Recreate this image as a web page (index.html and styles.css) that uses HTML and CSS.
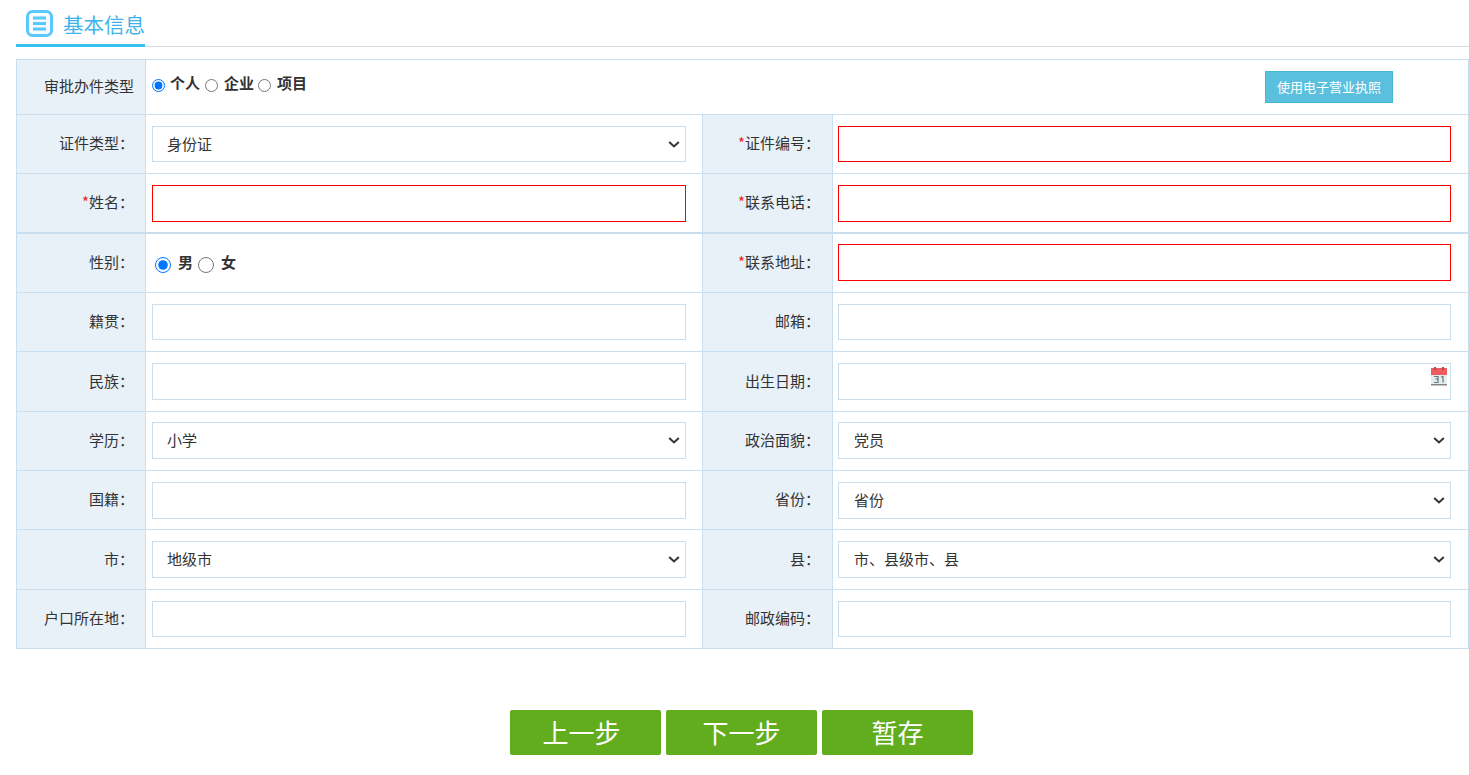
FILE: index.html
```html
<!DOCTYPE html>
<html lang="zh-CN">
<head>
<meta charset="utf-8">
<title>基本信息</title>
<link rel="stylesheet" href="styles.css">
</head>
<body>
<div class="page">
  <div class="tab-bar">
    <div class="tab">
      <svg class="tab-icon" width="27" height="27" viewBox="0 0 27 27" aria-hidden="true">
        <rect x="1.500" y="1.500" width="24" height="24" rx="5" fill="#f2fbff" stroke="#5ac8fa" stroke-width="3"/>
        <path d="M7 8h13M7 13.500h13M7 19h13" stroke="#5ac8fa" stroke-width="3" fill="none"/>
      </svg>
      <span>基本信息</span>
    </div>
  </div>
  <table class="form">
    <colgroup><col class="c1"><col class="c2"><col class="c3"><col class="c4"></colgroup>
    <tbody>
      <tr class="r55">
        <th>审批办件类型</th>
        <td colspan="3">
          <div class="type-row">
            <div class="radios small">
              <input type="radio" name="t" checked><b>个人</b>
              <input type="radio" name="t"><b>企业</b>
              <input type="radio" name="t"><b>项目</b>
            </div>
            <button class="license" type="button">使用电子营业执照</button>
          </div>
        </td>
      </tr>
      <tr class="r59">
        <th>证件类型：</th>
        <td><select class="field short"><option>身份证</option></select></td>
        <th class="right"><i>*</i>证件编号：</th>
        <td><input class="field wide req short" type="text"></td>
      </tr>
      <tr class="r59">
        <th><i>*</i>姓名：</th>
        <td><input class="field req down" type="text"></td>
        <th class="right"><i>*</i>联系电话：</th>
        <td><input class="field wide req down" type="text"></td>
      </tr>
      <tr class="r60 thick">
        <th>性别：</th>
        <td>
          <div class="radios big">
            <input type="radio" name="s" checked><b>男</b>
            <input type="radio" name="s"><b>女</b>
          </div>
        </td>
        <th class="right"><i>*</i>联系地址：</th>
        <td><input class="field wide req" type="text"></td>
      </tr>
      <tr class="r59">
        <th>籍贯：</th>
        <td><input class="field short" type="text"></td>
        <th class="right">邮箱：</th>
        <td><input class="field wide short" type="text"></td>
      </tr>
      <tr class="r60">
        <th>民族：</th>
        <td><input class="field" type="text"></td>
        <th class="right">出生日期：</th>
        <td>
          <div class="date-wrap">
            <input class="field wide" type="text">
            <svg class="cal" width="18" height="20" viewBox="0 0 18 20" aria-hidden="true">
              <rect x="1" y="2" width="16" height="17" fill="#e6ecea"/>
              <rect x="1" y="2" width="16" height="7" fill="#ee5b60"/>
              <rect x="1" y="18" width="16" height="1.500" fill="#8d8482"/>
              <rect x="4" y="1" width="2" height="3" fill="#b24a4e"/>
              <rect x="12" y="1" width="2" height="3" fill="#b24a4e"/>
              <path d="M4 10.500h4v2.500h-2.500M8 13v3.500h-4M11 11l2-.5v6" stroke="#5d7a7c" stroke-width="1.200" fill="none"/>
            </svg>
          </div>
        </td>
      </tr>
      <tr class="r59">
        <th>学历：</th>
        <td><select class="field up"><option>小学</option></select></td>
        <th class="right">政治面貌：</th>
        <td><select class="field wide up"><option>党员</option></select></td>
      </tr>
      <tr class="r59">
        <th>国籍：</th>
        <td><input class="field" type="text"></td>
        <th class="right">省份：</th>
        <td><select class="field wide"><option>省份</option></select></td>
      </tr>
      <tr class="r60">
        <th>市：</th>
        <td><select class="field"><option>地级市</option></select></td>
        <th class="right">县：</th>
        <td><select class="field wide"><option>市、县级市、县</option></select></td>
      </tr>
      <tr class="r59">
        <th>户口所在地：</th>
        <td><input class="field short" type="text"></td>
        <th class="right">邮政编码：</th>
        <td><input class="field wide short" type="text"></td>
      </tr>
    </tbody>
  </table>
  <div class="actions">
    <button class="go prev" type="button">上一步</button>
    <button class="go" type="button">下一步</button>
    <button class="go" type="button">暂存</button>
  </div>
</div>
</body>
</html>
```

FILE: styles.css
```css
* { box-sizing: border-box; }
html, body { margin: 0; padding: 0; background: #fff; overflow: hidden; }
body {
  font-family: "Noto Sans CJK SC", "Liberation Sans", sans-serif;
  font-size: 15px;
  color: #333;
}
.page { padding: 0 0 0 16px; width: 1469px; }
.tab-bar {
  height: 47px;
  border-bottom: 1px solid #d5dde3;
}
.tab {
  display: inline-flex;
  align-items: center;
  gap: 10px;
  width: 129px;
  height: 47px;
  padding: 3px 0 0 10px;
  border-bottom: 3px solid #37c0f2;
  color: #41b3ea;
  font-size: 20.500px;
  line-height: 28px;
  white-space: nowrap;
}
.tab-icon { flex: none; }
.form {
  margin-top: 12px;
  width: 1452px;
  table-layout: fixed;
  border-collapse: collapse;
}
.c1 { width: 129px; }
.c2 { width: 557px; }
.c3 { width: 130px; }
.c4 { width: 636px; }
.form th, .form td {
  border: 1px solid #c9deef;
  padding: 0;
  vertical-align: middle;
}
.form th {
  background: #e8f0f8;
  font-weight: 400;
  text-align: right;
  padding: 0 11px 3px 0;
  white-space: nowrap;
}
.form th.right { padding-right: 12px; }
.form td { padding-left: 6px; }
.form th i { color: #e22; font-style: normal; }
.r55 { height: 55px; }
.r59 { height: 59px; }
.r60 { height: 60px; }
.thick th, .thick td { border-top-width: 2px; }
.field {
  display: block;
  width: 534px;
  height: 37px;
  padding: 0 15px;
  border: 1px solid #c9deef;
  border-radius: 0;
  background: #fff;
  font: inherit;
  color: #333;
  outline: none;
}
select.field {
  appearance: none;
  -webkit-appearance: none;
  padding: 0 24px 2px 14px;
  background-image: url("data:image/svg+xml,%3Csvg xmlns='http://www.w3.org/2000/svg' width='12' height='7' viewBox='0 0 12 7'%3E%3Cpath d='M1.200 1l4.800 4.500L10.800 1' fill='none' stroke='%23333' stroke-width='2'/%3E%3C/svg%3E");
  background-repeat: no-repeat;
  background-position: right 5px center;
}
select.field.wide { padding-left: 15px; }
.field.short { height: 36px; }
.field.down { margin-top: 2px; }
.field.up { margin-bottom: 2px; }
.field.wide { width: 613px; margin-left: -1px; }
.field.req { border-color: #f00; }
.date-wrap { position: relative; width: 612px; }
.cal { position: absolute; right: 3px; top: 3px; }
.type-row {
  display: flex;
  align-items: center;
  height: 54px;
}
.radios { display: flex; align-items: center; white-space: nowrap; }
.radios input { margin: 0; flex: none; }
.radios b { font-weight: 700; color: #333; font-size: 15px; }
.radios.small { margin-top: -10px; }
.radios.small input { width: 13px; height: 13px; margin: 7px 6px 0 0; }
.radios.small input:first-child { margin-right: 5px; }
.radios.small b { margin-right: 4px; }
.radios.small b:first-of-type { margin-right: 5px; }
.radios.big { padding-left: 3px; margin-top: -2px; }
.radios.big input { width: 16px; height: 16px; margin: 7px 7px 0 0; }
.radios.big b { margin-right: 5px; }
.license {
  margin-left: auto;
  margin-right: 75px;
  width: 128px;
  height: 32px;
  padding: 0 0 2px;
  border: 1px solid #46b8da;
  background: #5bc0de;
  color: #fff;
  font: inherit;
  font-size: 13px;
}
.actions {
  display: flex;
  justify-content: center;
  gap: 5px;
  margin-top: 61px;
  padding-right: 2px;
}
.go {
  width: 151px;
  height: 45px;
  padding: 0 0 3px;
  border: 0;
  border-radius: 2px;
  background: #62ad1e;
  color: #fff;
  font: inherit;
  font-size: 26px;
}
.go.prev { padding-right: 8px; }
```
